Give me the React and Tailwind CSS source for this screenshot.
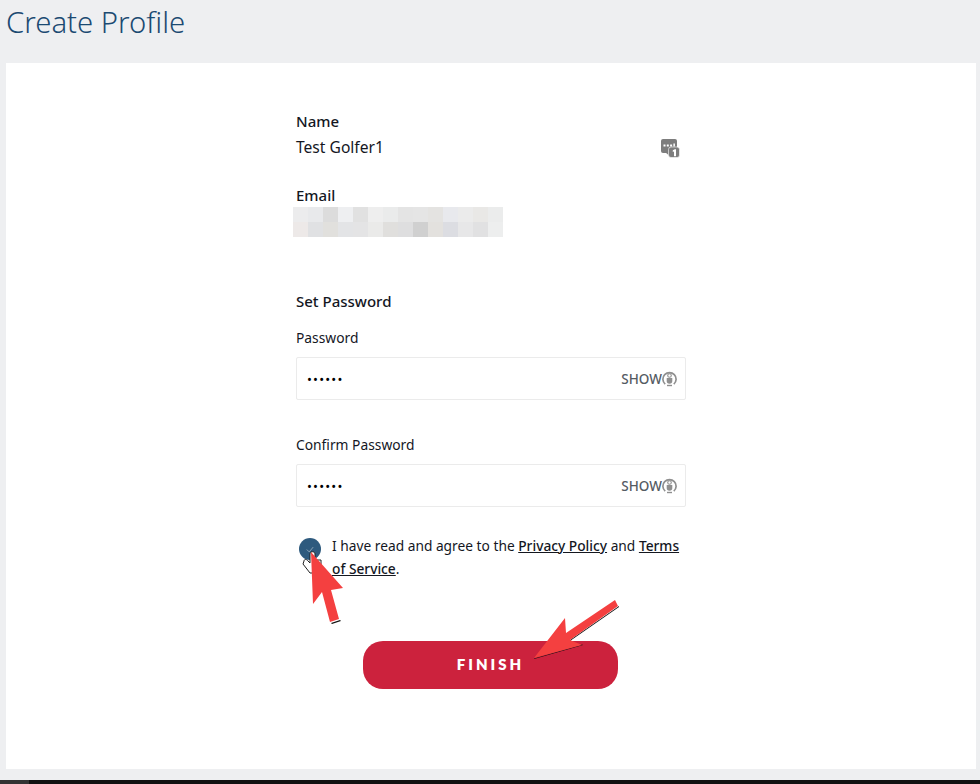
const font = { fontFamily: '"Noto Sans", "Open Sans", sans-serif' };

const mosaic = [
  'bg-[#ececed]', 'bg-[#e8e9eb]', 'bg-[#dcdcdc]', 'bg-[#eeeff1]', 'bg-[#e1e1e1]', 'bg-[#eeeeee]', 'bg-[#eaebeb]',
  'bg-[#e4e4e4]', 'bg-[#e5e5e5]', 'bg-[#e4e3e1]', 'bg-[#e8e9ed]', 'bg-[#ebebeb]', 'bg-[#e9e8e6]', 'bg-[#ebecec]',
  'bg-[#ede9e8]', 'bg-[#e0e1e3]', 'bg-[#e1e0dd]', 'bg-[#e3e4e6]', 'bg-[#e4e4e5]', 'bg-[#eaeae9]', 'bg-[#e0dfdd]',
  'bg-[#dededf]', 'bg-[#d0d0d0]', 'bg-[#e3e1de]', 'bg-[#dcdde2]', 'bg-[#e7e7e8]', 'bg-[#e1e1e2]', 'bg-[#edeeee]',
];

const MessageBadgeIcon = () => (
  <svg width="20" height="20" viewBox="0 0 20 20" className="block">
    <path d="M3 1h12a2 2 0 0 1 2 2v10a2 2 0 0 1-2 2H3a2 2 0 0 1-2-2V3a2 2 0 0 1 2-2z" fill="#7d7d7d" />
    <path d="M5 14h4v3.500z" fill="#7d7d7d" />
    <rect x="3.500" y="6.500" width="2" height="2" fill="#fff" />
    <rect x="6.800" y="6.500" width="2" height="2" fill="#fff" />
    <rect x="10.100" y="6.500" width="2" height="2" fill="#fff" />
    <rect x="13.400" y="5.500" width="1.500" height="3" fill="#fff" />
    <rect x="8.500" y="9" width="11" height="10.500" rx="2.500" fill="#7d7d7d" stroke="#fff" strokeWidth="0.600" />
    <path d="M12.800 12.200l2-1h1.200v7h-2v-4.800l-1.200 0.600z" fill="#fff" />
  </svg>
);

const LockEyeIcon = () => (
  <svg width="15" height="17" viewBox="0 0 15 17" className="block">
    <path d="M3.200 14.200A6.600 6.600 0 1 1 11.800 14.200" fill="none" stroke="#8f8f8f" strokeWidth="1.700" />
    <circle cx="7.500" cy="5.500" r="1.800" fill="none" stroke="#8f8f8f" strokeWidth="1.100" />
    <path d="M4.700 8h5.600v3a2.800 2.800 0 0 1-5.600 0z" fill="#8f8f8f" />
    <path d="M5 15.500h5" stroke="#8f8f8f" strokeWidth="1.400" />
  </svg>
);

const PasswordField = ({ label, className }) => (
  <div className={className}>
    <label className="block text-[13.8px] leading-[20px] text-[#14171f]">{label}</label>
    <div className="mt-[9px] flex h-[43px] items-center rounded-[2px] border border-[#ebebeb] bg-white pl-[10px] pr-[8px]">
      <span className="flex-1 pt-[2px] text-[13px] tracking-[1.2px] text-black">••••••</span>
      <span className="pt-[1px] text-[13.5px] font-medium text-[#555b63]">SHOW</span>
      <LockEyeIcon />
    </div>
  </div>
);

// annotation arrows and the mouse pointer drawn over the page
const Annotations = () => (
  <svg width="980" height="784" viewBox="0 0 980 784" className="pointer-events-none absolute inset-0">
    <path d="M304 561c0-2 3-2 4 0l2 2v-9c0-3 5-3 5 0v6h6v7l-3 6h-8l-7-9z" fill="#fff" stroke="#222" strokeWidth="1" />
    <path d="M331 623l9-3 1 1-9 3z" fill="#111" />
    <path d="M311 552l2 52 9-12 8 30 9-3-8-29 12-2z" fill="#f44040" />
    <path d="M534 659l49-14-1-0.500-48 14zM570 640l49-34 0 1-49 34z" fill="#111" />
    <path d="M534 658l31-40 1 15 49-33 3 6-48 34 12 5z" fill="#f44040" />
  </svg>
);

export default function App() {
  return (
    <div className="relative flex h-[784px] w-[980px] flex-col overflow-hidden bg-[#eeeff1]" style={font}>
      <h1 className="h-[63px] pl-[6px] pt-[3px] text-[29.3px] font-light leading-[38px] text-[#1b4a72]">Create Profile</h1>

      <main className="ml-[6px] mr-[4px] h-[706px] bg-white pt-[48px]">
        <div className="mx-auto w-[390px] text-[#14171f]">
          <div className="relative">
            <p className="text-[15px] font-medium leading-[20px]">Name</p>
            <p className="mt-[6px] text-[15.6px] leading-[20px]">Test Golfer1</p>
            <div className="absolute right-[6px] top-[27px]"><MessageBadgeIcon /></div>
          </div>

          <p className="mt-[28px] text-[15px] font-medium leading-[20px]">Email</p>
          <div className="-ml-[3px] mt-[2px] grid h-[30px] w-[210px] grid-cols-[repeat(14,15px)] grid-rows-[15px_15px]">
            {mosaic.map((c, i) => <div key={i} className={c} />)}
          </div>

          <p className="mt-[54px] text-[15px] font-medium leading-[20px]">Set Password</p>
          <PasswordField label="Password" className="mt-[17px]" />
          <PasswordField label="Confirm Password" className="mt-[35px]" />

          <div className="mt-[28px] flex">
            <div className="ml-[3px] mt-[3px] flex h-[22px] w-[22px] shrink-0 items-center justify-center rounded-full bg-[#2e5a7e]">
              <svg width="8" height="7" viewBox="0 0 10 8"><path d="M1 4l3 3 5-6" fill="none" stroke="#8fa6b8" strokeWidth="1.200" /></svg>
            </div>
            <p className="-mt-[1px] ml-[11px] text-[13.75px] leading-[23px]">
              I have read and agree to the <a className="font-medium underline">Privacy Policy</a> and <a className="font-medium underline">Terms</a> <a className="font-medium underline">of Service</a>.
            </p>
          </div>

          <button className="ml-[67px] mt-[61px] block h-[48px] w-[255px] rounded-[20px] bg-[#cc223d] pb-[2px] text-[15px] font-extrabold tracking-[0.2em] text-white" style={{ fontFamily: 'Lato, sans-serif' }}>
            FINISH
          </button>
        </div>
      </main>

      <div className="mt-auto flex h-[4px]">
        <div className="w-[29px] bg-[#333333]" />
        <div className="flex-1 bg-[#111111]" />
      </div>

      <Annotations />
    </div>
  );
}
